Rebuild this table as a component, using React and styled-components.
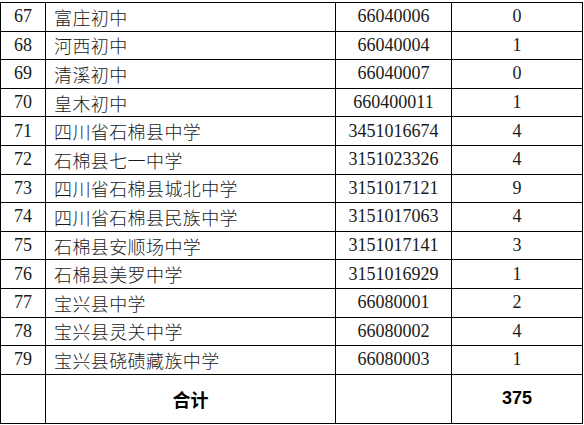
import React from 'react'
import styled, { createGlobalStyle } from 'styled-components'

const GlobalStyle = createGlobalStyle`
  html, body {
    margin: 0;
    padding: 0;
    background: #fff;
  }
`

const rows = [
  { no: 67, name: '富庄初中', code: '66040006', count: 0 },
  { no: 68, name: '河西初中', code: '66040004', count: 1 },
  { no: 69, name: '清溪初中', code: '66040007', count: 0 },
  { no: 70, name: '皇木初中', code: '660400011', count: 1 },
  { no: 71, name: '四川省石棉县中学', code: '3451016674', count: 4 },
  { no: 72, name: '石棉县七一中学', code: '3151023326', count: 4 },
  { no: 73, name: '四川省石棉县城北中学', code: '3151017121', count: 9 },
  { no: 74, name: '四川省石棉县民族中学', code: '3151017063', count: 4 },
  { no: 75, name: '石棉县安顺场中学', code: '3151017141', count: 3 },
  { no: 76, name: '石棉县美罗中学', code: '3151016929', count: 1 },
  { no: 77, name: '宝兴县中学', code: '66080001', count: 2 },
  { no: 78, name: '宝兴县灵关中学', code: '66080002', count: 4 },
  { no: 79, name: '宝兴县硗碛藏族中学', code: '66080003', count: 1 },
]

const Sheet = styled.div`
  margin-top: 2px;
  width: 583px;
  display: grid;
  grid-template-columns: 45px 290px 116px 131px;
  grid-template-rows: repeat(13, 28.6px) 49px;
  border-top: 1px solid #000;
  border-left: 1px solid #000;
  box-sizing: border-box;
`

const Cell = styled.div`
  box-sizing: border-box;
  border-right: 1px solid #000;
  border-bottom: 1px solid #000;
  display: flex;
  align-items: center;
  justify-content: ${({ $left }) => ($left ? 'flex-start' : 'center')};
  padding-left: ${({ $left }) => ($left ? '8px' : '0')};
  font-family: ${({ $cjk }) =>
    $cjk ? '"Noto Sans CJK SC", sans-serif' : '"Liberation Serif", serif'};
  font-weight: ${({ $cjk }) => ($cjk ? 300 : 400)};
  letter-spacing: ${({ $cjk }) => ($cjk ? '0.4px' : '0')};
  font-size: 18px;
  color: #1a1a1a;
  white-space: nowrap;
`

const TotalCell = styled(Cell)`
  font-family: ${({ $cjk }) =>
    $cjk ? '"Noto Sans CJK SC", sans-serif' : '"Liberation Sans", sans-serif'};
  font-weight: 700;
  letter-spacing: 0;
  color: #000;
`

export default function App() {
  return (
    <>
      <GlobalStyle />
      <Sheet>
        {rows.map(r => (
          <React.Fragment key={r.no}>
            <Cell>{r.no}</Cell>
            <Cell $cjk $left>{r.name}</Cell>
            <Cell>{r.code}</Cell>
            <Cell>{r.count}</Cell>
          </React.Fragment>
        ))}
        <TotalCell />
        <TotalCell $cjk>合计</TotalCell>
        <TotalCell />
        <TotalCell>375</TotalCell>
      </Sheet>
    </>
  )
}
